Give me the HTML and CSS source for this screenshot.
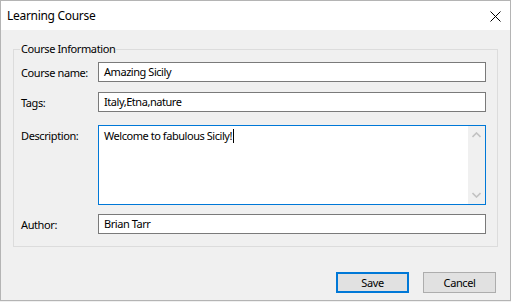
FILE: index.html
```html
<html lang="en">
<head>
    <meta charset="UTF-8">
    <title>Learning Course</title>
    <link rel="stylesheet" href="styles.css">
</head>
<body>
    <div class="window">
        <div class="titlebar">
            <span class="title">Learning Course</span>
            <svg class="close" width="11" height="11" viewBox="0 0 11 11">
                <path d="M0.5 0.5 L10.5 10.5 M10.5 0.5 L0.5 10.5" stroke="#000" stroke-width="1" fill="none"/>
            </svg>
        </div>
        <div class="content">
            <fieldset class="group">
                <legend>Course Information</legend>
                <div class="form">
                    <div class="row">
                        <label>Course name:</label>
                        <div class="field">Amazing Sicily</div>
                    </div>
                    <div class="row row-tags">
                        <label>Tags:</label>
                        <div class="field">Italy,Etna,nature</div>
                    </div>
                    <div class="row row-top">
                        <label>Description:</label>
                        <div class="memo">
                            <div class="memo-text">Welcome to fabulous Sicily!<span class="caret"></span></div>
                            <div class="scrollbar">
                                <svg width="9" height="6" viewBox="0 0 9 6"><path d="M0.5 5 L4.5 1 L8.5 5" stroke="#c2c2c2" stroke-width="1.6" fill="none"/></svg>
                                <svg width="9" height="6" viewBox="0 0 9 6"><path d="M0.5 1 L4.5 5 L8.5 1" stroke="#c2c2c2" stroke-width="1.6" fill="none"/></svg>
                            </div>
                        </div>
                    </div>
                    <div class="row row-author">
                        <label>Author:</label>
                        <div class="field">Brian Tarr</div>
                    </div>
                </div>
            </fieldset>
            <div class="buttons">
                <button class="btn btn-default">Save</button>
                <button class="btn">Cancel</button>
            </div>
        </div>
    </div>
</body>
</html>
```

FILE: styles.css
```css
body {
    margin: 0;
    font-family: "Noto Sans", "Open Sans", sans-serif;
    font-size: 11px;
    letter-spacing: -0.4px;
    color: #000;
    background-color: #f0f0f0;
}
.window {
    width: 511px;
    height: 301px;
    box-sizing: border-box;
    border: 1px solid #b4b4b4;
    display: flex;
    flex-direction: column;
}
.titlebar {
    height: 29px;
    background-color: #fff;
    display: flex;
    justify-content: space-between;
    align-items: center;
    padding: 0 9px 0 6px;
}
.title {
    font-size: 12px;
    letter-spacing: -0.3px;
    line-height: 16px;
}
.close {
    display: block;
    margin-top: 1px;
}
.content {
    flex: 1;
    background-color: #f0f0f0;
    padding: 11px 12px 0 12px;
}
.group {
    margin: 0;
    border: 1px solid #dcdcdc;
    padding: 5px 11px 12px 7px;
}
.group legend {
    padding: 0 1px;
    margin-left: -1px;
    line-height: 16px;
}
.form {
    display: flex;
    flex-direction: column;
}
.row {
    display: flex;
    align-items: center;
}
.row-tags {
    margin-top: 10px;
}
.row-top {
    align-items: flex-start;
    margin-top: 13px;
}
.row-author {
    margin-top: 9px;
}
.row label {
    width: 77px;
    flex-shrink: 0;
    white-space: nowrap;
}
.row-top label {
    padding-top: 3px;
}
.field {
    flex: 1;
    height: 20px;
    box-sizing: border-box;
    border: 1px solid #7a7a7a;
    background-color: #fff;
    padding: 0 5px;
    line-height: 18px;
    letter-spacing: -0.45px;
    white-space: nowrap;
}
.memo {
    flex: 1;
    height: 80px;
    box-sizing: border-box;
    border: 1px solid #0078d7;
    background-color: #fff;
    display: flex;
}
.memo-text {
    flex: 1;
    padding: 2px 5px;
    line-height: 16px;
    letter-spacing: -0.45px;
}
.caret {
    display: inline-block;
    width: 1px;
    height: 14px;
    background-color: #000;
    vertical-align: -3px;
    margin-left: 1px;
}
.scrollbar {
    width: 17px;
    background-color: #f0f0f0;
    display: flex;
    flex-direction: column;
    justify-content: space-between;
    align-items: center;
    padding: 6px 0 6px;
}
.scrollbar svg {
    display: block;
}
.buttons {
    display: flex;
    justify-content: flex-end;
    gap: 14px;
    margin-top: 25px;
    padding-right: 2px;
}
.btn {
    width: 73px;
    height: 21px;
    box-sizing: border-box;
    border: 1px solid #adadad;
    background-color: #e1e1e1;
    font-family: inherit;
    font-size: 11px;
    letter-spacing: -0.4px;
    color: #000;
    padding: 0;
    line-height: 17px;
}
.btn-default {
    border: 2px solid #0078d7;
}
```
